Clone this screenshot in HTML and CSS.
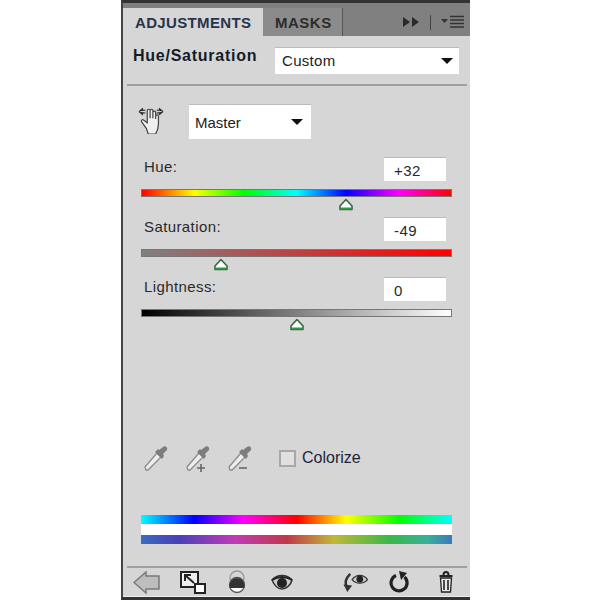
FILE: index.html
```html
<!DOCTYPE html>
<html>
<head>
    <title>Adjustments</title>
    <link rel="stylesheet" href="styles.css">
</head>
<body>
    <div class="panel">
        <!-- Tabs -->
        <div class="tabbar">
            <div class="tab active">ADJUSTMENTS</div>
            <div class="tab">MASKS</div>
            <div class="tab-tools">
                <svg width="17" height="10" viewBox="0 0 17 10"><path d="M0 0l7 5-7 5zM9 0l7 5-7 5z" fill="#2a2a2a"/></svg>
                <span class="tool-sep"></span>
                <svg width="24" height="14" viewBox="0 0 24 14"><path d="M0 4h7l-3.500 4z" fill="#333"/><path d="M9 1.500h14M9 5h14M9 8.500h14M9 12h14" stroke="#333" stroke-width="1.500"/></svg>
            </div>
        </div>

        <!-- Preset -->
        <div class="preset-row">
            <div class="preset-title">Hue/Saturation</div>
            <div class="dropdown dropdown-wide">Custom<span class="arrow"></span></div>
        </div>
        <div class="divider"></div>

        <!-- Channel -->
        <div class="channel-row">
            <svg class="hand" width="28" height="28" viewBox="0 0 28 30">
                <path d="M1 6l4-3.500v2h3M1 6l4 3.500v-2h3M27 6l-4-3.500v2h-3M27 6l-4 3.500v-2h-3" fill="#222" stroke="#222"/>
                <path d="M9 24l-5-7c-1-2 1-3 2-2l4 3V5c0-2 3-2 3 0v8-8c0-2 3-2 3 0v8-6c0-2 3-2 3 0v7-3c0-2 3-2 3 0v8c0 5-1 7-3 11h-8z" fill="#efefef" stroke="#444" stroke-width="1.300"/>
            </svg>
            <div class="dropdown dropdown-small">Master<span class="arrow"></span></div>
        </div>

        <!-- Sliders -->
        <div class="slider-group">
            <div class="label-row"><span>Hue:</span><div class="value">+32</div></div>
            <div class="track track-hue"></div>
            <div class="thumb-row"><svg class="thumb" style="left: 65.900%" width="16" height="13" viewBox="0 0 16 13"><path d="M8 1.500l6 6.500v3.500H2V8z" fill="#fff" stroke="#2f6b3a" stroke-width="1.600" stroke-linejoin="round"/><path d="M3 9.500h10v2H3z" fill="#2e9a41"/></svg></div>
        </div>
        <div class="slider-group">
            <div class="label-row"><span>Saturation:</span><div class="value">-49</div></div>
            <div class="track track-sat"></div>
            <div class="thumb-row"><svg class="thumb" style="left: 25.800%" width="16" height="13" viewBox="0 0 16 13"><path d="M8 1.500l6 6.500v3.500H2V8z" fill="#fff" stroke="#2f6b3a" stroke-width="1.600" stroke-linejoin="round"/><path d="M3 9.500h10v2H3z" fill="#2e9a41"/></svg></div>
        </div>
        <div class="slider-group">
            <div class="label-row"><span>Lightness:</span><div class="value">0</div></div>
            <div class="track track-light"></div>
            <div class="thumb-row"><svg class="thumb" style="left: 50%" width="16" height="13" viewBox="0 0 16 13"><path d="M8 1.500l6 6.500v3.500H2V8z" fill="#fff" stroke="#2f6b3a" stroke-width="1.600" stroke-linejoin="round"/><path d="M3 9.500h10v2H3z" fill="#2e9a41"/></svg></div>
        </div>

        <!-- Eyedroppers -->
        <div class="picker-row">
            <svg width="28" height="28" viewBox="0 0 28 28"><path d="M4 26l-1-3L15 9l4 4L6 26z" fill="#eee" stroke="#8c8c8c" stroke-width="1.300"/><path d="M13 8l7 7 2-3-1-2 4-4c1-3-2-5-4-3l-4 3-1-1z" fill="#7d7d7d"/></svg>
            <svg width="28" height="28" viewBox="0 0 28 28"><path d="M4 26l-1-3L15 9l4 4L6 26z" fill="#eee" stroke="#8c8c8c" stroke-width="1.300"/><path d="M13 8l7 7 2-3-1-2 4-4c1-3-2-5-4-3l-4 3-1-1z" fill="#7d7d7d"/><path d="M13 24h8M17 20v8" stroke="#666" stroke-width="1.600"/></svg>
            <svg width="28" height="28" viewBox="0 0 28 28"><path d="M4 26l-1-3L15 9l4 4L6 26z" fill="#eee" stroke="#8c8c8c" stroke-width="1.300"/><path d="M13 8l7 7 2-3-1-2 4-4c1-3-2-5-4-3l-4 3-1-1z" fill="#7d7d7d"/><path d="M13 24h8" stroke="#666" stroke-width="1.600"/></svg>
            <div class="colorize"><span class="checkbox"></span>Colorize</div>
        </div>

        <!-- Colour bars -->
        <div class="bars">
            <div class="bar bar-top"></div>
            <div class="bar-gap"></div>
            <div class="bar bar-bottom"></div>
        </div>

        <!-- Bottom toolbar -->
        <div class="spacer"></div>
        <div class="divider"></div>
        <div class="toolbar">
            <div class="toolbar-left">
                <svg width="28" height="23" viewBox="0 0 28 23"><path d="M1 11.500L13 1v4h13v13H13v4z" fill="#bdbdbd" stroke="#7a7a7a" stroke-width="1.500"/></svg>
                <svg width="28" height="24" viewBox="0 0 28 24"><path d="M2 2h17v15H2z" fill="#eee" stroke="#222" stroke-width="2"/><path d="M15 13l-8-7M6 11V5h6" fill="none" stroke="#222" stroke-width="2"/><path d="M16 14h10v9H16z" fill="#fff" stroke="#222" stroke-width="2"/></svg>
                <svg class="mask-icon" width="18" height="24" viewBox="0 0 18 24"><ellipse cx="9" cy="8" rx="7" ry="7" fill="none" stroke="#999" stroke-width="1.300"/><ellipse cx="9" cy="15" rx="7.500" ry="7.500" fill="#fff" stroke="#555" stroke-width="1.300"/><path d="M1.500 16a7.500 8 0 0 1 15 0c0 .6-.1 1.200-.3 2H1.800c-.2-.8-.3-1.400-.3-2z" fill="#333"/></svg>
                <svg class="eye-icon" width="22" height="16" viewBox="0 0 22 16"><path d="M1 6c5-6 15-6 20 0-1 5-6 9-10 9S3 11 1 6z" fill="#ccc" stroke="#333" stroke-width="1.500"/><path d="M1 6c6-4 14-4 20 0" fill="none" stroke="#222" stroke-width="2"/><circle cx="11" cy="9" r="5" fill="#222"/></svg>
            </div>
            <div class="toolbar-right">
                <svg width="28" height="23" viewBox="0 0 28 24"><path d="M9 3C4 8 3 13 6 17" fill="none" stroke="#333" stroke-width="2.600"/><path d="M2 14l9 1-5 7z" fill="#333"/><path d="M11 9c4-6 12-6 16 0-4 5-12 5-16 0z" fill="#ccc" stroke="#333" stroke-width="1.300"/><circle cx="19" cy="8.500" r="3.500" fill="#222"/></svg>
                <svg class="undo-icon" width="20" height="22" viewBox="0 0 20 22"><path d="M7 4.500A8 8 0 1 0 15.500 6" fill="none" stroke="#222" stroke-width="3.200"/><path d="M10 0l8 2-6 7z" fill="#222"/></svg>
                <svg class="trash-icon" width="18" height="22" viewBox="0 0 17 22"><path d="M2 5h13M6 4c0-4 5-4 5 0" fill="none" stroke="#222" stroke-width="2"/><path d="M3 7h11l-1 14H4z" fill="#e8e8e8" stroke="#222" stroke-width="1.300"/><path d="M6.500 9v10M10.500 9v10" stroke="#222" stroke-width="1.600"/></svg>
            </div>
        </div>
    </div>
</body>
</html>
```
FILE: styles.css
```css
/* Page and panel shell */
body {
    margin: 0;
    background-color: #fff;
    font-family: "Liberation Sans", Arial, sans-serif;
    color: #222;
}
.panel {
    width: 347px;
    height: 594px;
    margin-left: 121px;
    background-color: #d6d6d6;
    border-left: 2px solid #444;
    border-top: 3px solid #333;
    border-bottom: 3px solid #333;
    display: flex;
    flex-direction: column;
}
/* The icons are soft in the screenshot */
svg {
    filter: blur(0.4px);
}
/* Tabs */
.tabbar {
    height: 33px;
    background-color: #808080;
    display: flex;
    align-items: flex-end;
    flex-shrink: 0;
}
.tab {
    width: 80px;
    height: 28px;
    line-height: 29px;
    font-size: 15px;
    font-weight: bold;
    color: #2c2c2c;
    letter-spacing: 0.5px;
    padding-left: 12px;
    background-color: #8b8b8b;
    border-right: 1px solid #555;
    box-sizing: border-box;
}
.tab.active {
    width: 140px;
    letter-spacing: 0.35px;
    background-color: #d6d6d6;
    color: #28344a;
    border-right: none;
}
.tab-tools {
    margin-left: auto;
    height: 28px;
    display: flex;
    align-items: center;
    gap: 10px;
    padding-right: 5px;
}
.tool-sep {
    width: 1px;
    height: 15px;
    background-color: #444;
}
/* Preset row */
.preset-row {
    height: 48px;
    display: flex;
    align-items: center;
    padding-left: 10px;
    flex-shrink: 0;
}
.preset-title {
    width: 142px;
    font-size: 16px;
    font-weight: bold;
    letter-spacing: 0.75px;
    color: #141c2a;
    margin-top: -8px;
}
.dropdown {
    background-color: #fff;
    font-size: 15px;
    color: #222;
    display: flex;
    align-items: center;
    justify-content: space-between;
    box-sizing: border-box;
    border-top: 1px solid #bbb;
}
.dropdown-wide {
    width: 184px;
    height: 27px;
    padding: 0 6px 0 7px;
    letter-spacing: 0.3px;
}
.dropdown-small {
    width: 122px;
    height: 35px;
    padding: 0 8px 0 6px;
}
.arrow {
    width: 0;
    height: 0;
    border-left: 6px solid transparent;
    border-right: 6px solid transparent;
    border-top: 6px solid #111;
}
.divider {
    height: 2px;
    margin: 0 3px 0 4px;
    background-color: #a0a0a0;
    flex-shrink: 0;
}
/* Channel row */
.channel-row {
    height: 70px;
    display: flex;
    align-items: center;
    gap: 24px;
    padding: 18px 0 17px 14px;
    box-sizing: border-box;
    flex-shrink: 0;
}
.hand {
    flex-shrink: 0;
    margin-top: -4px;
}
/* Sliders */
.slider-group {
    padding: 0 18px;
    height: 60px;
    flex-shrink: 0;
}
.label-row {
    display: flex;
    justify-content: space-between;
    align-items: center;
    height: 26px;
    padding: 0 6px 0 3px;
    font-size: 15px;
    letter-spacing: 0.4px;
    color: #2a2a2a;
}
.label-row span {
    margin-top: -5px;
}
.value {
    width: 62px;
    height: 24px;
    line-height: 25px;
    padding-left: 10px;
    box-sizing: border-box;
    background-color: #fff;
    border-top: 1px solid #bbb;
}
.track {
    height: 8px;
    margin-top: 7px;
    box-sizing: border-box;
    border: 1px solid #777;
}
.track-hue {
    background: linear-gradient(to right, #f00, #ff0 17%, #0f0 33%, #0ff 50%, #00f 66%, #f0f 83%, #f00);
}
.track-sat {
    background: linear-gradient(to right, #808080, #f00);
}
.track-light {
    background: linear-gradient(to right, #000, #808080 50%, #fff);
}
.thumb-row {
    position: relative;
    height: 13px;
}
.thumb {
    position: absolute;
    top: 1px;
    transform: translateX(-8px);
}
/* Eyedroppers */
.picker-row {
    margin-top: 107px;
    height: 30px;
    display: flex;
    align-items: center;
    gap: 14px;
    padding-left: 19px;
    flex-shrink: 0;
}
.colorize {
    display: flex;
    align-items: center;
    gap: 6px;
    margin-left: 11px;
    font-size: 16px;
    color: #1c2536;
}
.checkbox {
    width: 17px;
    height: 17px;
    box-sizing: border-box;
    background-color: #e0e0e0;
    border: 2px solid #a8a8a8;
}
/* Colour bars */
.bars {
    margin: 42px 18px 0;
    flex-shrink: 0;
}
.bar {
    height: 9px;
}
.bar-gap {
    height: 11px;
    background-color: #fff;
}
.bar-top {
    background: linear-gradient(to right, #0ff, #00f 17%, #f0f 33%, #f00 50%, #ff0 66%, #0f0 83%, #0ff);
}
.bar-bottom {
    background: linear-gradient(to right, #3a6ac0, #4a40b8 12%, #c03ab8 30%, #c03a48 47%, #c0b838 62%, #3ab848 80%, #3ab098 92%, #3a78c0);
}
/* Bottom toolbar */
.spacer {
    flex: 1;
}
.toolbar {
    height: 29px;
    display: flex;
    justify-content: space-between;
    align-items: center;
    padding: 0 15px 0 10px;
    box-sizing: border-box;
    border-bottom: 1px solid #ececec;
    flex-shrink: 0;
}
.toolbar-left, .toolbar-right {
    display: flex;
    align-items: center;
}
.toolbar-left {
    gap: 18px;
}
.mask-icon {
    margin-left: 3px;
}
.eye-icon {
    margin-left: 7px;
}
.undo-icon {
    margin-left: 20px;
}
.trash-icon {
    margin-left: 28px;
}
```
